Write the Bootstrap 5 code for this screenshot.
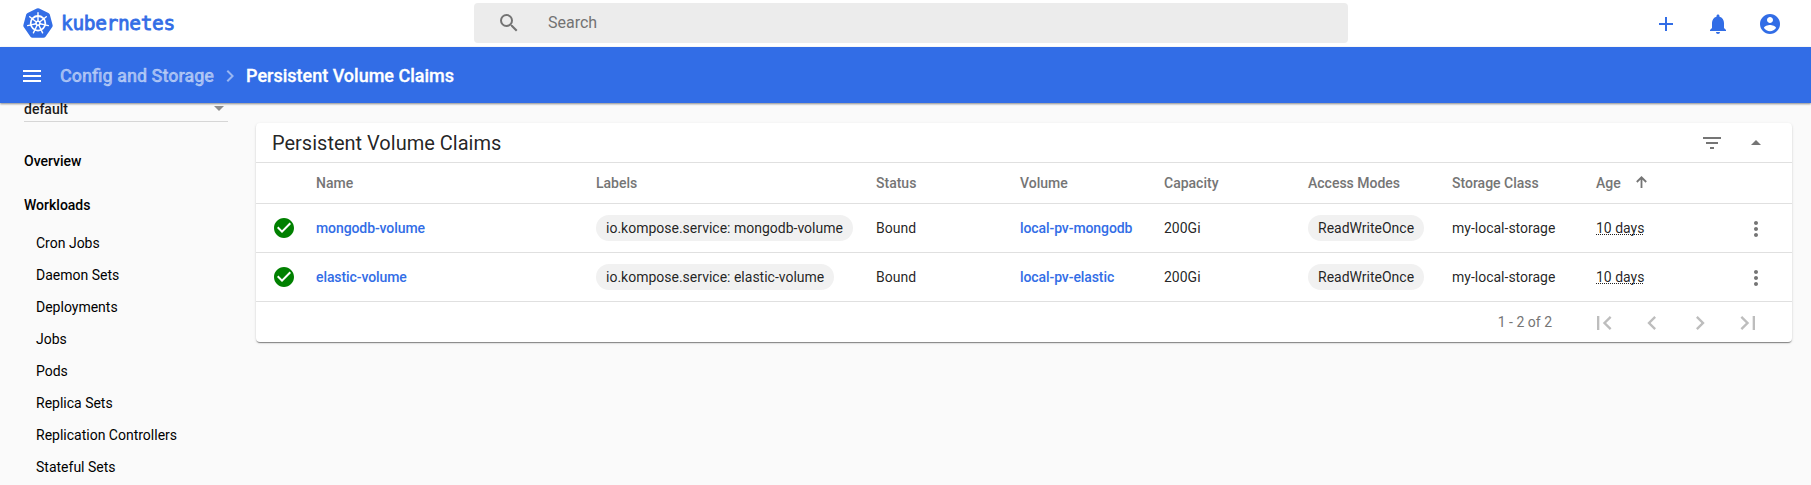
<!DOCTYPE html>
<html lang="en">
<head>
<meta charset="utf-8">
<meta name="viewport" content="width=device-width, initial-scale=1">
<title>Kubernetes Dashboard</title>
<link rel="stylesheet" href="https://cdn.jsdelivr.net/npm/bootstrap@5.3.0/dist/css/bootstrap.min.css">
<style>
body{font-family:Roboto,"Liberation Sans",sans-serif;font-size:14px;line-height:20px;background:#fafafa;color:rgba(0,0,0,.87);height:485px;overflow:hidden}
svg{display:block;fill:currentColor;flex:none}
a{text-decoration:none}
.topbar{height:47px;padding:0 29px 0 23px}
.brand{width:451px;color:#326de6;gap:8px}
.logo{margin-bottom:2px}
.wordmark{font-family:"DejaVu Sans Mono",monospace;font-size:19.5px;letter-spacing:-.35px;-webkit-text-stroke:.8px #326de6;line-height:24px}
.searchbox{width:874px;height:40px;margin-bottom:1px;background:#ececec;border-radius:4px;padding-left:23px;gap:27px;color:#737373;font-size:16px}
.searchbox svg{margin-bottom:1px}
.actions{color:#326de6;gap:28px}
.crumbs{height:56px;background:#326de6;color:#fff;padding:2px 0 0 20px;font-size:18px;font-weight:500;-webkit-text-stroke:.3px currentColor;box-shadow:0 1px 2px rgba(0,0,0,.45);position:relative;z-index:1}
.crumbs .parent{color:rgba(255,255,255,.55);margin-left:16px}
.side{width:256px;padding-left:24px;color:#000}
.ns{width:204px;height:19px;border-bottom:1px solid #d6d6d6;font-weight:500;color:#1c1c1c;padding:0 4px 7px 0}
.caret{color:#8d8d8d}
.side .head{font-weight:500;height:44px}
.side .first{margin-top:17px}
.side .nav-link{color:#000;height:32px;padding:0 0 0 12px;display:flex;align-items:center}
.panel{width:1536px;height:219px;margin-top:20px;border:0;border-radius:4px;box-shadow:0 2px 1px -1px rgba(0,0,0,.28),0 1px 1px rgba(0,0,0,.2),0 1px 3px rgba(0,0,0,.12)}
.panel-title{height:41px;border-bottom:1px solid #e0e0e0;padding:0 24px 0 16px;font-size:20px}
.tools{color:#757575;gap:20px}
.claims{table-layout:fixed;margin:0;color:rgba(0,0,0,.87)}
.claims>:not(caption)>*>*{padding:0;background:transparent;color:inherit;border-bottom:1px solid #e0e0e0;white-space:nowrap;vertical-align:middle}
.claims>thead>tr>th{height:40px;font-weight:500;color:#757575}
.claims>tbody>tr>td{height:49px}
.claims a{color:#326de6;font-weight:500;letter-spacing:-.09px}
.c-icon{width:60px}.c-wide{width:280px}.c-mid{width:144px}
.claims .ok{color:#008000;margin-left:16px}
.sort{margin:0 0 3px 15px}
.chip{display:inline-block;height:26px;line-height:26px;padding:0 10px;border-radius:13px;background:#f1f1f1;vertical-align:middle}
.age{text-decoration:underline dotted 1px;text-underline-offset:1px;text-decoration-skip-ink:none}
.more{color:#757575;margin:2px 24px 0 auto}
.pager{height:41px;padding-right:30px;color:#757575}
.pages{color:#bdbdbd;gap:20px;margin:2px 0 0 38px}
</style>
</head>
<body>
<header>
<div class="topbar bg-white d-flex align-items-center">
<div class="brand d-flex align-items-center">
<svg class="logo" width="30" height="30" viewBox="0 0 30 30"><path d="M13.8.4Q15-.1 16.2.4L25.4 4.9Q26.5 5.4 26.8 6.6L29.6 17.1Q29.9 18.3 29.1 19.3L22.5 28.8Q21.7 29.8 20.5 29.8H9.5Q8.3 29.8 7.5 28.8L.9 19.3Q.1 18.3.4 17.1L3.2 6.6Q3.5 5.4 4.6 4.9Z"/><g fill="none" stroke="#fff" stroke-linecap="round"><circle cx="15" cy="15.3" r="7.3" stroke-width="1.8"/><g stroke-width="1.4"><path id="s" d="M15 13.2V4.700"/><use href="#s" transform="rotate(51.43 15 15.3)"/><use href="#s" transform="rotate(102.86 15 15.3)"/><use href="#s" transform="rotate(154.29 15 15.3)"/><use href="#s" transform="rotate(205.71 15 15.3)"/><use href="#s" transform="rotate(257.14 15 15.3)"/><use href="#s" transform="rotate(308.57 15 15.3)"/></g><circle cx="15" cy="15.3" r="2" stroke-width="1.4"/></g></svg>
<span class="wordmark">kubernetes</span>
</div>
<div class="searchbox d-flex align-items-center">
<svg width="24" height="24" viewBox="0 0 24 24"><path d="M15.5 14h-.79l-.28-.27A6.471 6.471 0 0 0 16 9.5 6.5 6.5 0 1 0 9.5 16c1.61 0 3.09-.59 4.23-1.57l.27.28v.79l5 4.99L20.49 19l-4.99-5zm-6 0C7.01 14 5 11.99 5 9.5S7.01 5 9.5 5 14 7.01 14 9.5 11.99 14 9.5 14z"/></svg>
<span>Search</span>
</div>
<div class="actions d-flex ms-auto">
<svg width="24" height="24" viewBox="0 0 24 24"><path d="M19 13h-6v6h-2v-6H5v-2h6V5h2v6h6v2z"/></svg>
<svg width="24" height="24" viewBox="0 0 24 24"><path d="M12 22c1.1 0 2-.9 2-2h-4c0 1.1.89 2 2 2zm6-6v-5c0-3.07-1.64-5.64-4.5-6.32V4c0-.83-.67-1.5-1.5-1.5s-1.5.67-1.5 1.5v.68C7.63 5.36 6 7.92 6 11v5l-2 2v1h16v-1l-2-2z"/></svg>
<svg width="24" height="24" viewBox="0 0 24 24"><path d="M12 2C6.48 2 2 6.48 2 12s4.48 10 10 10 10-4.48 10-10S17.52 2 12 2zm0 3c1.66 0 3 1.34 3 3s-1.34 3-3 3-3-1.34-3-3 1.34-3 3-3zm0 14.2c-2.5 0-4.71-1.28-6-3.22.03-1.99 4-3.08 6-3.08 1.99 0 5.97 1.09 6 3.08-1.29 1.94-3.5 3.22-6 3.22z"/></svg>
</div>
</div>
<nav class="crumbs d-flex align-items-center">
<svg width="24" height="24" viewBox="0 0 24 24"><path d="M3 18h18v-2H3v2zm0-5h18v-2H3v2zm0-7v2h18V6H3z"/></svg>
<span class="parent">Config and Storage</span>
<svg class="mx-1 opacity-50" width="24" height="24" viewBox="0 0 24 24"><path d="M10 6L8.59 7.41 13.17 12l-4.58 4.59L10 18l6-6z"/></svg>
<span>Persistent Volume Claims</span>
</nav>
</header>
<div class="d-flex">
<aside class="side flex-shrink-0">
<div class="ns d-flex align-items-center justify-content-between"><span>default</span><svg class="caret" width="10" height="5" viewBox="0 0 10 5"><path d="M0 0h10L5 5z"/></svg></div>
<div class="head first d-flex align-items-center">Overview</div>
<div class="head d-flex align-items-center">Workloads</div>
<nav class="nav flex-column flex-nowrap">
<a class="nav-link" href="#">Cron Jobs</a>
<a class="nav-link" href="#">Daemon Sets</a>
<a class="nav-link" href="#">Deployments</a>
<a class="nav-link" href="#">Jobs</a>
<a class="nav-link" href="#">Pods</a>
<a class="nav-link" href="#">Replica Sets</a>
<a class="nav-link" href="#">Replication Controllers</a>
<a class="nav-link" href="#">Stateful Sets</a>
</nav>
</aside>
<main class="card panel flex-shrink-0">
<div class="panel-title d-flex align-items-center justify-content-between">
<span>Persistent Volume Claims</span>
<div class="tools d-flex">
<svg width="24" height="24" viewBox="0 0 24 24"><path d="M10 18h4v-2h-4v2zM3 6v2h18V6H3zm3 7h12v-2H6v2z"/></svg>
<svg width="24" height="24" viewBox="0 0 24 24"><path d="M7 14l5-5 5 5z"/></svg>
</div>
</div>
<table class="table claims">
<colgroup><col class="c-icon"><col class="c-wide"><col class="c-wide"><col class="c-mid"><col class="c-mid"><col class="c-mid"><col class="c-mid"><col class="c-mid"><col></colgroup>
<thead><tr><th></th><th>Name</th><th>Labels</th><th>Status</th><th>Volume</th><th>Capacity</th><th>Access Modes</th><th>Storage Class</th><th><div class="d-flex align-items-center"><span>Age</span><svg class="sort" width="11" height="12" viewBox="0 0 11 12"><path fill="none" stroke="currentColor" stroke-width="1.8" d="M5.5 12V1.5M.8 6L5.5 1.3 10.2 6"/></svg></div></th></tr></thead>
<tbody>
<tr><td><svg class="ok" width="24" height="24" viewBox="0 0 24 24"><path d="M12 2C6.48 2 2 6.48 2 12s4.48 10 10 10 10-4.48 10-10S17.52 2 12 2zm-2 15l-5-5 1.41-1.41L10 14.17l7.59-7.59L19 8l-9 9z"/></svg></td><td><a href="#">mongodb-volume</a></td><td><span class="chip">io.kompose.service: mongodb-volume</span></td><td>Bound</td><td><a href="#">local-pv-mongodb</a></td><td>200Gi</td><td><span class="chip">ReadWriteOnce</span></td><td>my-local-storage</td><td><div class="d-flex align-items-center"><span class="age">10 days</span><svg class="more" width="24" height="24" viewBox="0 0 24 24"><path d="M12 8c1.1 0 2-.9 2-2s-.9-2-2-2-2 .9-2 2 .9 2 2 2zm0 2c-1.1 0-2 .9-2 2s.9 2 2 2 2-.9 2-2-.9-2-2-2zm0 6c-1.1 0-2 .9-2 2s.9 2 2 2 2-.9 2-2-.9-2-2-2z"/></svg></div></td></tr>
<tr><td><svg class="ok" width="24" height="24" viewBox="0 0 24 24"><path d="M12 2C6.48 2 2 6.48 2 12s4.48 10 10 10 10-4.48 10-10S17.52 2 12 2zm-2 15l-5-5 1.41-1.41L10 14.17l7.59-7.59L19 8l-9 9z"/></svg></td><td><a href="#">elastic-volume</a></td><td><span class="chip">io.kompose.service: elastic-volume</span></td><td>Bound</td><td><a href="#">local-pv-elastic</a></td><td>200Gi</td><td><span class="chip">ReadWriteOnce</span></td><td>my-local-storage</td><td><div class="d-flex align-items-center"><span class="age">10 days</span><svg class="more" width="24" height="24" viewBox="0 0 24 24"><path d="M12 8c1.1 0 2-.9 2-2s-.9-2-2-2-2 .9-2 2 .9 2 2 2zm0 2c-1.1 0-2 .9-2 2s.9 2 2 2 2-.9 2-2-.9-2-2-2zm0 6c-1.1 0-2 .9-2 2s.9 2 2 2 2-.9 2-2-.9-2-2-2z"/></svg></div></td></tr>
</tbody>
</table>
<div class="pager d-flex align-items-center justify-content-end">
<span>1 - 2 of 2</span>
<div class="pages d-flex">
<svg width="28" height="28" viewBox="0 0 24 24"><path d="M18.41 16.59L13.82 12l4.59-4.59L17 6l-6 6 6 6zM6 6h2v12H6z"/></svg>
<svg width="28" height="28" viewBox="0 0 24 24"><path d="M15.41 7.41L14 6l-6 6 6 6 1.41-1.41L10.83 12z"/></svg>
<svg width="28" height="28" viewBox="0 0 24 24"><path d="M10 6L8.59 7.41 13.17 12l-4.58 4.59L10 18l6-6z"/></svg>
<svg width="28" height="28" viewBox="0 0 24 24"><path d="M5.59 7.41L10.18 12l-4.59 4.59L7 18l6-6-6-6zM16 6h2v12h-2z"/></svg>
</div>
</div>
</main>
</div>
<script src="https://cdn.jsdelivr.net/npm/bootstrap@5.3.0/dist/js/bootstrap.bundle.min.js"></script>
</body>
</html>
